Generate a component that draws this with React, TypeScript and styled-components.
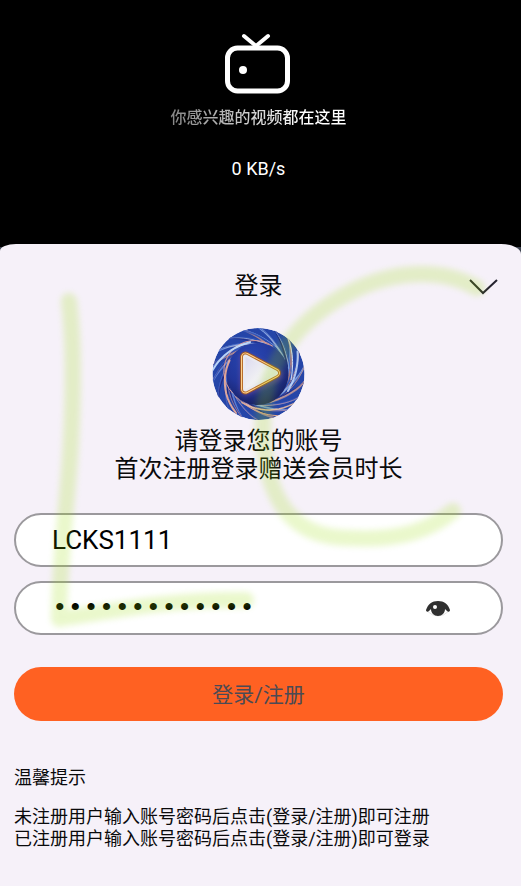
import React, { useState } from 'react';
import styled, { createGlobalStyle } from 'styled-components';

const GlobalStyle = createGlobalStyle`
  * { box-sizing: border-box; }
  body {
    margin: 0;
    background: #f6f1f9;
    font-family: Roboto, "Noto Sans CJK SC", sans-serif;
    color: #0a0a0c;
  }
  h1, p { margin: 0; font-weight: 400; }
`;

const Page = styled.main`
  position: relative;
  display: flex;
  flex-direction: column;
  min-height: 100vh;
  background: #3d4350;
`;

const Hero = styled.header`
  display: flex;
  flex-direction: column;
  align-items: center;
  height: 247px;
  padding: 32px 18px 0 14px;
  background: #000;
  color: #fff;
`;

const Slogan = styled.p`
  margin-top: 10px;
  font-size: 16px;
  line-height: 24px;
  font-weight: 500;
  background: linear-gradient(90deg, #858585, #fff 75%);
  background-clip: text;
  -webkit-background-clip: text;
  color: transparent;
`;

const Speed = styled.p`
  margin-top: 27px;
  font-size: 18px;
  line-height: 24px;
`;

const Sheet = styled.section`
  flex: 1;
  margin-top: -3px;
  padding: 26px 18px 24px 14px;
  border-radius: 16px 20px 0 0 / 7px 10px 0 0;
  background: #f6f1f9;
`;

const SheetHeader = styled.div`
  display: grid;
  grid-template-columns: 1fr auto 1fr;
  align-items: center;
`;

const Title = styled.h1`
  grid-column: 2;
  font-size: 24px;
  line-height: 32px;
`;

const IconButton = styled.button`
  display: flex;
  padding: 0;
  border: 0;
  background: none;
  cursor: pointer;
`;

const CloseButton = styled(IconButton)`
  justify-self: end;
  padding-right: 5px;
`;

const Intro = styled.div`
  display: flex;
  flex-direction: column;
  align-items: center;
  margin-top: 26px;
`;

const Prompt = styled.p`
  margin-top: 7px;
  font-size: 24px;
  line-height: 28px;
  text-align: center;
`;

const Form = styled.form`
  display: flex;
  flex-direction: column;
  gap: 14px;
  margin-top: 30px;
`;

const Field = styled.label`
  display: flex;
  align-items: center;
  height: 54px;
  padding: 0 50px 0 36px;
  border: 2px solid #9b999d;
  border-radius: 27px;
  background: #fff;
`;

const TextBox = styled.input<{ $masked?: boolean }>`
  flex: 1;
  min-width: 0;
  height: 40px;
  padding: 0;
  border: 0;
  outline: 0;
  background: none;
  color: #000;
  font-family: ${(p) => (p.$masked ? '"Liberation Mono", monospace' : 'Roboto, sans-serif')};
  font-size: 26px;
`;

const Submit = styled.button`
  height: 54px;
  margin-top: 18px;
  padding-bottom: 3px;
  border: 0;
  border-radius: 27px;
  background: #ff6122;
  color: #4b4a54;
  font-family: inherit;
  font-size: 21px;
  cursor: pointer;
`;

const Hints = styled.div`
  display: flex;
  flex-direction: column;
  gap: 17px;
  margin-top: 46px;
  font-size: 18px;
  line-height: 22px;
`;

/* Translucent marker strokes lying over the whole page. */
const Marker = styled.svg`
  position: absolute;
  top: 0;
  left: 0;
  width: 100%;
  pointer-events: none;
`;

const TvIcon = () => (
  <svg width="68" height="64" viewBox="0 0 68 64" fill="none" stroke="#fff" aria-hidden="true">
    <path d="M19 4L31 14L43 4" strokeWidth="4" strokeLinecap="round" />
    <rect x="2.500" y="16" width="60" height="43" rx="10" strokeWidth="5" />
    <circle cx="18" cy="38" r="4" fill="#fff" stroke="none" />
  </svg>
);

const strand = (start: number, sweep: number, inner: number, outer: number) => {
  const pts: string[] = [];
  for (let i = 0; i <= 12; i++) {
    const t = i / 12;
    const a = ((start - sweep * t) * Math.PI) / 180;
    const r = inner + (outer - inner) * t * t;
    pts.push(`${(46 + r * Math.cos(a)).toFixed(1)} ${(46 + r * Math.sin(a)).toFixed(1)}`);
  }
  return `M${pts.join('L')}`;
};

const tones = ['#6f97e8', '#17206f', '#b98a9f', '#2f55bd', '#9fc0f3', '#1b2a86', '#d89a86', '#3a62c8', '#2a237a'];

const AppLogo = () => (
  <svg width="93" height="92" viewBox="0 0 92 92" aria-hidden="true">
    <defs>
      <clipPath id="disc"><circle cx="46" cy="46" r="46" /></clipPath>
      <radialGradient id="core" cx="40%" cy="25%" r="75%">
        <stop offset="0" stopColor="#2848b4" />
        <stop offset="0.6" stopColor="#22369a" />
        <stop offset="1" stopColor="#182267" />
      </radialGradient>
      <linearGradient id="face" x1="0" y1="0" x2="1" y2="1">
        <stop offset="0" stopColor="#dcdaf0" />
        <stop offset="0.5" stopColor="#f0f0f3" />
        <stop offset="1" stopColor="#dfe3e4" />
      </linearGradient>
      <filter id="glow" x="-30%" y="-30%" width="160%" height="160%"><feGaussianBlur stdDeviation="2" /></filter>
    </defs>
    <g clipPath="url(#disc)" fill="none" strokeLinecap="round">
      <circle cx="46" cy="46" r="46" fill="#2545a8" />
      {Array.from({ length: 72 }, (_, i) => (
        <path
          key={i}
          d={strand(i * 5, 52 + (i % 4) * 6, 30 + (i % 3), 49)}
          stroke={tones[(i * 7 + (i % 5)) % tones.length]}
          strokeWidth={i % 3 === 0 ? 2 : 1}
          opacity={0.7}
        />
      ))}
      <circle cx="45" cy="46" r="31" fill="url(#core)" />
      <path d="M20 65A31 31 0 0 1 60 18" stroke="#d99a98" strokeWidth="1" />
      <path d={strand(205, 85, 32, 45)} stroke="#f0b09a" strokeWidth="2" opacity="0.9" />
      <path d={strand(120, 80, 33, 46)} stroke="#edc1a4" strokeWidth="1.5" opacity="0.9" />
      <path d={strand(135, 70, 32, 46)} stroke="#e3a791" strokeWidth="1" />
      <path d={strand(255, 70, 33, 46)} stroke="#c7e2ff" strokeWidth="2" opacity="0.9" />
      <path d={strand(30, 60, 34, 45)} stroke="#bcd4f8" strokeWidth="2" opacity="0.9" />
      <path d={strand(10, 60, 33, 46)} stroke="#d3e0f7" strokeWidth="1" />
    </g>
    <g strokeLinejoin="round">
      <path d="M33 30V62L64 47Z" fill="#60408f" stroke="#6a4aa0" strokeWidth="12" filter="url(#glow)" opacity="0.6" />
      <path d="M33 29V61L63 45Z" fill="#99552a" stroke="#99552a" strokeWidth="11" />
      <path d="M33 29V61L63 45Z" fill="#ffe0a0" stroke="#ffd18a" strokeWidth="9" />
      <path d="M33 29V61L63 45Z" fill="#b96f2c" stroke="#b96f2c" strokeWidth="7" />
      <path d="M33 29V61L63 45Z" fill="#e9e9f0" stroke="#e9e9f0" strokeWidth="5" />
      <path d="M33 29V61L63 45Z" fill="url(#face)" />
    </g>
  </svg>
);

const ChevronIcon = () => (
  <svg width="29" height="18" viewBox="0 0 29 18" fill="none" stroke="#25232f" strokeWidth="2" aria-hidden="true">
    <path d="M1 3L14 16L28 3" />
  </svg>
);

const EyeIcon = () => (
  <svg width="26" height="18" viewBox="0 0 26 18" aria-hidden="true">
    <path d="M2 12Q7 17 13 17T24 12" fill="none" stroke="#e4e4e4" />
    <path d="M1 11C3 5 7 2 13 2S23 5 25 11C25 13 23 13 22 12L20 10C20 14 17 17 13 17S6 14 6 10L4 12C3 13 1 13 1 11Z" fill="#303030" />
    <circle cx="10" cy="8" r="2" fill="#fff" />
  </svg>
);

export default function App() {
  const [account, setAccount] = useState('LCKS1111');
  const [password, setPassword] = useState('abcdefghijklm');
  const [visible, setVisible] = useState(false);

  return (
    <>
      <GlobalStyle />
      <Page>
        <Hero>
          <TvIcon />
          <Slogan>你感兴趣的视频都在这里</Slogan>
          <Speed>0 KB/s</Speed>
        </Hero>
        <Sheet>
          <SheetHeader>
            <Title>登录</Title>
            <CloseButton type="button" aria-label="关闭">
              <ChevronIcon />
            </CloseButton>
          </SheetHeader>
          <Intro>
            <AppLogo />
            <Prompt>
              请登录您的账号
              <br />
              首次注册登录赠送会员时长
            </Prompt>
          </Intro>
          <Form onSubmit={(e) => e.preventDefault()}>
            <Field>
              <TextBox aria-label="账号" value={account} onChange={(e) => setAccount(e.target.value)} />
            </Field>
            <Field>
              <TextBox
                $masked
                aria-label="密码"
                type={visible ? 'text' : 'password'}
                value={password}
                onChange={(e) => setPassword(e.target.value)}
              />
              <IconButton type="button" aria-label="显示密码" onClick={() => setVisible(!visible)}>
                <EyeIcon />
              </IconButton>
            </Field>
            <Submit type="submit">登录/注册</Submit>
          </Form>
          <Hints>
            <p>温馨提示</p>
            <p>
              未注册用户输入账号密码后点击(登录/注册)即可注册
              <br />
              已注册用户输入账号密码后点击(登录/注册)即可登录
            </p>
          </Hints>
        </Sheet>
        <Marker viewBox="0 0 521 886" aria-hidden="true">
          <defs>
            <filter id="soft" x="-10%" y="-10%" width="120%" height="120%">
              <feGaussianBlur stdDeviation="3" />
            </filter>
          </defs>
          <g
            fill="none"
            stroke="#96dc00"
            strokeWidth="16"
            strokeLinecap="round"
            strokeLinejoin="round"
            opacity="0.2"
            filter="url(#soft)"
          >
            <path d="M69 301C74 340 73 400 71 440C69 490 60 550 59 619C110 611 170 599 246 600" />
            <path d="M477 288C440 267 390 270 345 295C285 328 262 375 263 430C265 490 285 538 350 538C400 541 430 530 453 511" />
          </g>
        </Marker>
      </Page>
    </>
  );
}
